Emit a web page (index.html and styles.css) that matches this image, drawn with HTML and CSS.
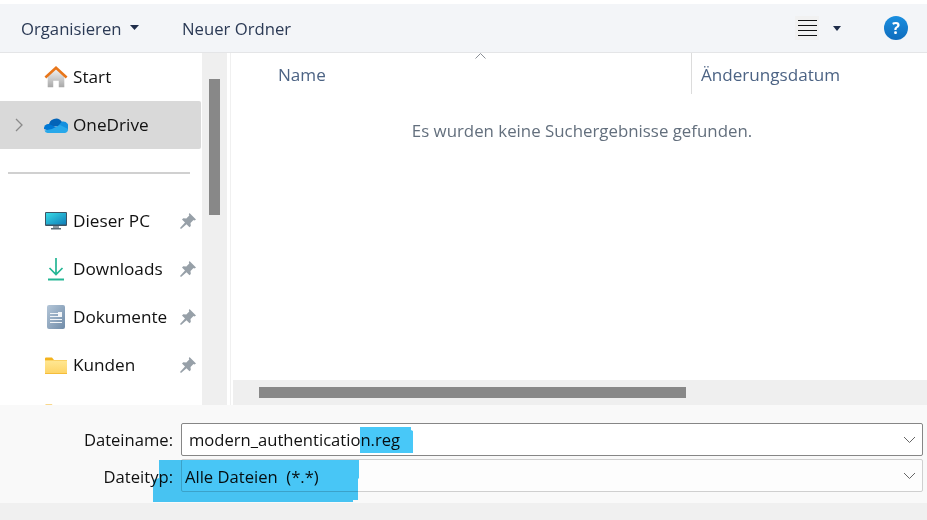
FILE: index.html
```html
<!DOCTYPE html>
<html lang="de">
<head>
<meta charset="utf-8">
<title>Speichern unter</title>
<link rel="stylesheet" href="styles.css">
</head>
<body>
<div class="dialog">
  <header class="toolbar">
    <button class="tool org">Organisieren<svg class="caret" width="9" height="5" viewBox="0 0 9 5"><path d="M0 0h9L4.500 5z"/></svg></button>
    <button class="tool new">Neuer Ordner</button>
    <div class="tool-right">
      <span class="view"><svg width="19" height="16" viewBox="0 0 19 16"><path d="M0 .5h19M0 5.500h19M0 10.500h19M0 15.500h19" stroke="#111" fill="none"/></svg></span>
      <svg class="caret view-caret" width="8" height="5" viewBox="0 0 8 5"><path d="M0 0h8L4 5z"/></svg>
      <span class="help">?</span>
    </div>
  </header>
  <div class="body">
    <nav class="sidebar">
      <div class="nav-item"><span class="ico"><svg width="25" height="24" viewBox="0 0 26 24"><defs><linearGradient id="hg" x1="0" y1="0" x2="0" y2="1"><stop offset="0" stop-color="#f4f4f4"/><stop offset="1" stop-color="#a8a8a8"/></linearGradient></defs><path d="M4 11 13 3l9 8v12h-6v-7h-6v7H4z" fill="url(#hg)"/><path d="M1.500 12.500 13 2l11.500 10.500" fill="none" stroke="#e8761a" stroke-width="2.800"/></svg></span><span class="lbl">Start</span></div>
      <div class="nav-item active"><svg class="chev" width="8" height="14" viewBox="0 0 8 14"><path d="M1 1l6 6-6 6" fill="none" stroke="#8a8a8a" stroke-width="1.300"/></svg><span class="ico"><svg width="24" height="16" viewBox="0 0 24 16"><path d="M5 9a7 7 0 0 1 13-4l2 5z" fill="#0364b8"/><path d="M13 10 18 4.600a5.500 5.500 0 0 1 6 8z" fill="#1490df"/><path d="M0 12a4.500 4.500 0 0 1 5-5l9 4-6 4z" fill="#0078d4"/><path d="M3.500 16h17a3.500 3.500 0 0 0 3.500-4L16 8l-8 4-7.500 1.500a3.500 3.500 0 0 0 3 2.500z" fill="#28a8ea"/></svg></span><span class="lbl">OneDrive</span></div>
      <div class="nav-sep"><hr></div>
      <div class="nav-item"><span class="ico"><svg width="22" height="18" viewBox="0 0 22 18"><defs><linearGradient id="pc" x1="0" y1="0" x2="1" y2="1"><stop offset="0" stop-color="#38dbe6"/><stop offset="1" stop-color="#0f7db8"/></linearGradient></defs><rect x="0" y="0" width="22" height="14" rx="1" fill="#3c5464"/><rect x="1" y="1" width="20" height="11.500" fill="url(#pc)"/><rect x="8" y="14" width="6" height="2" fill="#8b98a0"/><rect x="6" y="16" width="10" height="1.500" fill="#5a6a74"/></svg></span><span class="lbl">Dieser PC</span><svg class="pin" width="16" height="16" viewBox="0 0 16 16"><path d="M9.500 0 16 6.500l-1.500 1-1-.5-3 3 .3 3-1.300 1.300-3-3L1 16l-1-1 5-5.500-3-3 1.300-1.300 3 .3 3-3-.5-1z" fill="#97a0a8"/></svg></div>
      <div class="nav-item"><span class="ico"><svg width="18" height="24" viewBox="0 0 18 24"><path d="M9 1v16M2.500 11 9 17.500 15.500 11" fill="none" stroke="#24b694" stroke-width="1.700"/><path d="M1 22.500h16" stroke="#24b694" stroke-width="2"/></svg></span><span class="lbl">Downloads</span><svg class="pin" width="16" height="16" viewBox="0 0 16 16"><path d="M9.500 0 16 6.500l-1.500 1-1-.5-3 3 .3 3-1.300 1.300-3-3L1 16l-1-1 5-5.500-3-3 1.300-1.300 3 .3 3-3-.5-1z" fill="#97a0a8"/></svg></div>
      <div class="nav-item"><span class="ico"><svg width="18" height="24" viewBox="0 0 18 24"><defs><linearGradient id="dk" x1="0" y1="0" x2="1" y2="1"><stop offset="0" stop-color="#b4c6d8"/><stop offset="1" stop-color="#6f8ba8"/></linearGradient></defs><rect width="18" height="24" rx="2" fill="url(#dk)"/><path d="M3 8.500h8M3 11.500h12M3 14.500h12M3 17.500h12" stroke="#f2f5f8"/><rect x="11" y="7" width="4" height="4" fill="#f2f5f8"/></svg></span><span class="lbl">Dokumente</span><svg class="pin" width="16" height="16" viewBox="0 0 16 16"><path d="M9.500 0 16 6.500l-1.500 1-1-.5-3 3 .3 3-1.300 1.300-3-3L1 16l-1-1 5-5.500-3-3 1.300-1.300 3 .3 3-3-.5-1z" fill="#97a0a8"/></svg></div>
      <div class="nav-item"><span class="ico"><svg width="22" height="17" viewBox="0 0 22 17"><defs><linearGradient id="fd" x1="0" y1="0" x2="0" y2="1"><stop offset="0" stop-color="#ffe793"/><stop offset="1" stop-color="#fed568"/></linearGradient></defs><path d="M0 1.500A1 1 0 0 1 1 .5h6l2 2.500v3H0z" fill="#f3b21c"/><path d="M0 3h22v14H0z" fill="#f5bd3a"/><path d="M0 3.500h22V16H0z" fill="url(#fd)"/></svg></span><span class="lbl">Kunden</span><svg class="pin" width="16" height="16" viewBox="0 0 16 16"><path d="M9.500 0 16 6.500l-1.500 1-1-.5-3 3 .3 3-1.300 1.300-3-3L1 16l-1-1 5-5.500-3-3 1.300-1.300 3 .3 3-3-.5-1z" fill="#97a0a8"/></svg></div>
      <div class="nav-item"><span class="ico peek"><svg width="22" height="17" viewBox="0 0 22 17"><path d="M0 1.500A1 1 0 0 1 1 .5h6l2 2.500v3H0z" fill="#f3b21c"/><path d="M0 3h22v14H0z" fill="#f5bd3a"/></svg></span></div>
    </nav>
    <div class="vscroll"><div class="vthumb"></div></div>
    <main class="main">
      <div class="cols">
        <div class="col col-name">Name<svg class="sort" width="11" height="6" viewBox="0 0 11 6"><path d="M.5 5.500l5-5 5 5" fill="none" stroke="#8a8f96"/></svg></div>
        <div class="col col-date">Änderungsdatum</div>
      </div>
      <p class="empty">Es wurden keine Suchergebnisse gefunden.</p>
      <div class="hscroll"><div class="hthumb"></div></div>
    </main>
  </div>
  <section class="form">
    <svg class="marks" width="927" height="98" viewBox="0 0 927 98"><path d="M360 22h51v3l2 1v22h-53zM159 55h200v18l-1 1v21h-5v2H153V75l6-2z" fill="#48c8f8"/></svg>
    <div class="row">
      <label class="row-label">Dateiname:</label>
      <div class="field field-name"><span>modern_authentication.reg</span><svg width="13" height="7" viewBox="0 0 13 7"><path d="M1 1l5.500 5.500L12 1" fill="none" stroke="#666"/></svg></div>
    </div>
    <div class="row row-type">
      <label class="row-label">Dateityp:</label>
      <div class="field field-type"><span>Alle Dateien&nbsp; (*.*)</span><svg width="13" height="7" viewBox="0 0 13 7"><path d="M1 1l5.500 5.500L12 1" fill="none" stroke="#666"/></svg></div>
    </div>
  </section>
  <footer class="foot"></footer>
</div>
</body>
</html>
```

FILE: styles.css
```css
* { box-sizing: border-box; }
html, body { margin: 0; padding: 0; }
body {
  width: 927px;
  height: 520px;
  overflow: hidden;
  background: #fff;
  font-family: "Open Sans", "Noto Sans", sans-serif;
  font-size: 16px;
  color: #111;
}
.dialog { display: flex; flex-direction: column; height: 520px; padding-top: 4px; }

.toolbar {
  flex: none;
  height: 49px;
  display: flex;
  align-items: center;
  background: #f3f5f8;
  border-bottom: 1px solid #e4e5e7;
  color: #2b3a55;
}
.tool {
  border: 0;
  background: none;
  padding: 1px 0 0;
  font: inherit;
  font-size: 16.700px;
  color: inherit;
  display: flex;
  align-items: center;
}
.org { margin-left: 21px; width: 161px; }
.caret { fill: #1f2d4a; flex: none; }
.org .caret { margin-left: 8px; margin-top: -2px; }
.tool-right { margin-left: auto; display: flex; align-items: center; padding-right: 19px; }
.view {
  width: 24px;
  height: 24px;
  display: flex;
  align-items: center;
  justify-content: center;
  background: #f1f1f1;
}
.view-caret { margin-left: 14px; }
.help {
  margin-left: 43px;
  width: 24px;
  height: 24px;
  border-radius: 50%;
  background: linear-gradient(#1a8fe0, #0f6cbd);
  color: #fff;
  font-weight: 700;
  font-size: 16px;
  line-height: 24px;
  text-align: center;
}

.body { flex: 1; min-height: 0; display: flex; }
.sidebar { flex: none; width: 202px; overflow: hidden; }
.nav-item {
  height: 48px;
  width: 201px;
  position: relative;
  display: flex;
  align-items: center;
  padding-left: 44px;
  border-radius: 0 2px 2px 0;
}
.nav-item.active { background: #d9d9d9; }
.chev { position: absolute; left: 15px; top: 17px; }
.ico { width: 24px; margin-right: 5px; flex: none; display: flex; align-items: center; justify-content: center; }
.ico.peek { margin-bottom: 2px; }
.lbl { flex: 1; font-size: 17.200px; white-space: nowrap; padding-bottom: 1px; }
.pin { flex: none; margin-right: 5px; }
.nav-sep { height: 48px; display: flex; align-items: center; padding: 0 12px 0 8px; }
.nav-sep hr { width: 100%; height: 2px; margin: 0; border: 0; background: #d0d0d0; }

.vscroll { flex: none; width: 25px; background: #efefef; padding: 26px 0 0 7px; }
.vthumb { width: 11px; height: 136px; background: #888; }

.main {
  flex: 1;
  min-width: 0;
  margin-left: 3px;
  border-left: 1px solid #f0f0f0;
  display: flex;
  flex-direction: column;
  color: #56687f;
}
.cols { flex: none; height: 41px; display: flex; color: #4c6384; font-size: 17.100px; }
.col { position: relative; display: flex; align-items: flex-end; padding-bottom: 8px; }
.col-name { width: 461px; padding-left: 47px; border-right: 1px solid #dcdcdc; }
.col-date { padding-left: 9px; }
.sort { position: absolute; left: 244px; top: 0; }
.empty { flex: 1; margin: 0; padding: 25px 0 0 6px; font-size: 16.850px; text-align: center; color: #636f7d; }
.hscroll { flex: none; height: 25px; margin-left: 2px; background: #efefef; padding: 7px 0 0 26px; }
.hthumb { width: 427px; height: 11px; background: #888; }

.form {
  flex: none;
  height: 98px;
  position: relative;
  background: #f9f9f9;
  padding: 18px 4px 0 0;
  display: flex;
  flex-direction: column;
  gap: 3px;
  font-size: 16.600px;
}
.marks { position: absolute; left: 0; top: 0; mix-blend-mode: multiply; z-index: 2; }
.row { display: flex; align-items: center; height: 33px; }
.row-type .row-label, .row-type .field span { padding-top: 2px; }
.row-label { width: 173px; text-align: right; }
.field {
  flex: 1;
  margin-left: 8px;
  height: 33px;
  display: flex;
  align-items: center;
  justify-content: space-between;
  border-radius: 2px;
  padding-right: 6px;
}
.field-name { background: #fff; border: 1.500px solid #868686; padding-left: 7px; }
.field-type { background: #fdfdfd; border: 1.500px solid #cfcfcf; padding-left: 3px; }
.foot { flex: none; height: 17px; background: #f0f0f0; }
```
